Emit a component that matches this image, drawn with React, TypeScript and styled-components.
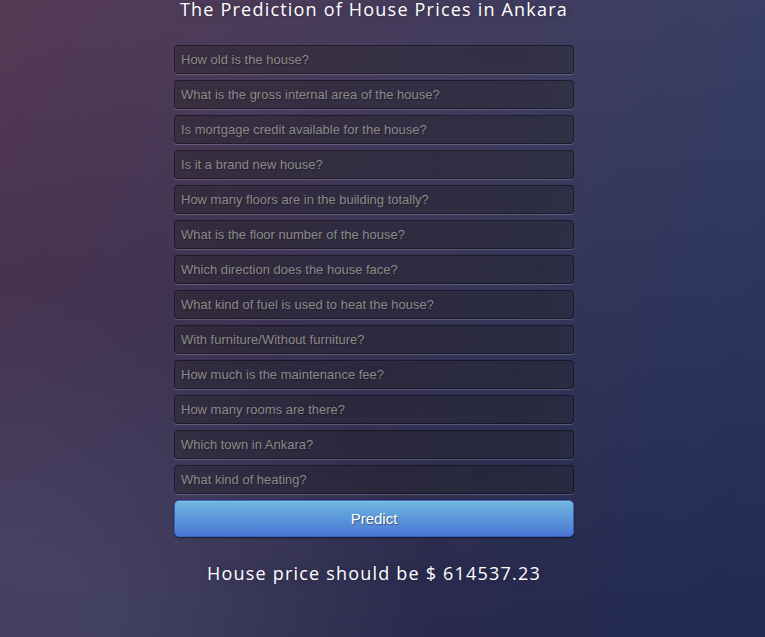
import React from "react";
import styled, { createGlobalStyle } from "styled-components";

const GlobalStyle = createGlobalStyle`
  html, body { margin: 0; padding: 0; height: 100%; }
  body {
    font-family: "Open Sans", sans-serif;
    background: #18204f;
  }
  * { box-sizing: border-box; }
`;

const Page = styled.div`
  min-height: 100vh;
  padding-right: 17px;
  display: flex;
  justify-content: center;
  background:
    radial-gradient(ellipse farthest-corner at 0% 100%, rgba(100,120,160,0.3) 10%, rgba(100,120,160,0) 40%),
    linear-gradient(to bottom, rgba(57,173,219,0.25) 0%, rgba(42,60,87,0.4) 100%),
    linear-gradient(135deg, #601428 0%, #18204f 100%);
`;

const Panel = styled.div`
  width: 400px;
  display: flex;
  flex-direction: column;
`;

const Title = styled.h1`
  margin: 0 0 27px;
  color: #fff;
  font-family: "Open Sans", sans-serif;
  font-weight: 400;
  font-size: 18px;
  line-height: 18px;
  letter-spacing: 1.2px;
  text-align: center;
  text-shadow: 0 0 10px rgba(0,0,0,0.3);
`;

const Form = styled.form`
  display: flex;
  flex-direction: column;
  gap: 6px;
`;

const Field = styled.input`
  width: 100%;
  height: 29px;
  margin: 0;
  padding: 6px;
  font-family: "Liberation Sans", Arial, sans-serif;
  font-size: 13px;
  color: #fff;
  background: rgba(0,0,0,0.3);
  border: 1px solid rgba(0,0,0,0.3);
  border-radius: 4px;
  outline: none;
  text-shadow: 1px 1px 1px rgba(0,0,0,0.3);
  box-shadow: inset 0 -5px 45px rgba(100,100,100,0.2), 0 1px 1px rgba(255,255,255,0.2);
  &::placeholder { color: #8a8a8a; }
`;

const Button = styled.button`
  width: 100%;
  height: 37px;
  padding: 9px 14px;
  font-family: "Liberation Sans", Arial, sans-serif;
  font-size: 15px;
  line-height: normal;
  color: #fff;
  text-shadow: 1px 1px 1px rgba(0,0,0,0.4);
  border: 1px solid #3762bc;
  border-radius: 5px;
  background-color: #4a77d4;
  background-image: linear-gradient(to bottom, #6eb6de, #4a77d4);
  box-shadow: inset 0 1px 0 rgba(255,255,255,0.2), 0 1px 2px rgba(0,0,0,0.5);
  cursor: pointer;
`;

const Result = styled.div`
  margin-top: 27px;
  color: #fff;
  font-family: "Open Sans", sans-serif;
  font-size: 18px;
  line-height: 18px;
  letter-spacing: 1.2px;
  text-align: center;
  text-shadow: 0 0 10px rgba(0,0,0,0.3);
`;

const questions = [
  "How old is the house?",
  "What is the gross internal area of the house?",
  "Is mortgage credit available for the house?",
  "Is it a brand new house?",
  "How many floors are in the building totally?",
  "What is the floor number of the house?",
  "Which direction does the house face?",
  "What kind of fuel is used to heat the house?",
  "With furniture/Without furniture?",
  "How much is the maintenance fee?",
  "How many rooms are there?",
  "Which town in Ankara?",
  "What kind of heating?",
];

export default function App() {
  return (
    <>
      <GlobalStyle />
      <Page>
        <Panel>
          <Title>The Prediction of House Prices in Ankara</Title>
          <Form onSubmit={(e) => e.preventDefault()}>
            {questions.map((q) => (
              <Field key={q} type="text" placeholder={q} />
            ))}
            <Button type="submit">Predict</Button>
          </Form>
          <Result>House price should be $ 614537.23</Result>
        </Panel>
      </Page>
    </>
  );
}
